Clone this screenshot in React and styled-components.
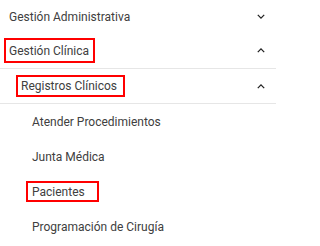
import React from "react";
import styled, { createGlobalStyle } from "styled-components";

const GlobalStyle = createGlobalStyle`
  body {
    margin: 0;
    background: #ffffff;
    font-family: Roboto, "Liberation Sans", sans-serif;
  }
`;

const leaves = [
  { label: "Atender Procedimientos" },
  { label: "Junta Médica" },
  { label: "Pacientes", marked: true, pad: "2px 12px 1px 4px" },
  { label: "Programación de Cirugía" },
];

function Chevron({ up }) {
  return (
    <ChevronIcon viewBox="0 0 10 6" $up={up}>
      <path d="M1 1l4 4 4-4" />
    </ChevronIcon>
  );
}

export default function App() {
  return (
    <>
      <GlobalStyle />
      <Menu>
        <Row $height={33} $indent={9}>
          <Label>Gestión Administrativa</Label>
          <Chevron />
        </Row>
        <Row $height={36} $indent={4} $divider>
          <Label $marked $pad="4px 4px 3px 3px">
            Gestión Clínica
          </Label>
          <Chevron up />
        </Row>
        <Row $height={35} $indent={16} $divider>
          <Label $marked $pad="2px 6px 2px 3px">
            Registros Clínicos
          </Label>
          <Chevron up />
        </Row>
        <Leaves>
          {leaves.map((item) => (
            <Leaf key={item.label}>
              <Label $marked={item.marked} $pad={item.pad || "0 0 0 6px"}>
                {item.label}
              </Label>
            </Leaf>
          ))}
        </Leaves>
      </Menu>
    </>
  );
}

const Menu = styled.nav`
  width: 276px;
  display: flex;
  flex-direction: column;
`;

const Row = styled.div`
  display: flex;
  align-items: center;
  justify-content: space-between;
  height: ${(props) => props.$height}px;
  padding: 0 11px 0 ${(props) => props.$indent}px;
  border-bottom: ${(props) => (props.$divider ? "1px solid #e6e6e6" : "none")};
  box-sizing: border-box;
`;

const Label = styled.span`
  display: inline-block;
  font-size: 12px;
  line-height: 14px;
  color: #404040;
  padding: ${(props) => props.$pad || "0"};
  border: ${(props) => (props.$marked ? "2px solid #ff0000" : "none")};
  white-space: nowrap;
`;

const ChevronIcon = styled.svg`
  width: 8px;
  height: 5px;
  fill: none;
  stroke: #222222;
  stroke-width: 1.6;
  transform: ${(props) => (props.$up ? "rotate(180deg)" : "none")};
`;

const Leaves = styled.div`
  display: flex;
  flex-direction: column;
  padding-left: 26px;
`;

const Leaf = styled.div`
  display: flex;
  align-items: center;
  height: 35px;
`;
